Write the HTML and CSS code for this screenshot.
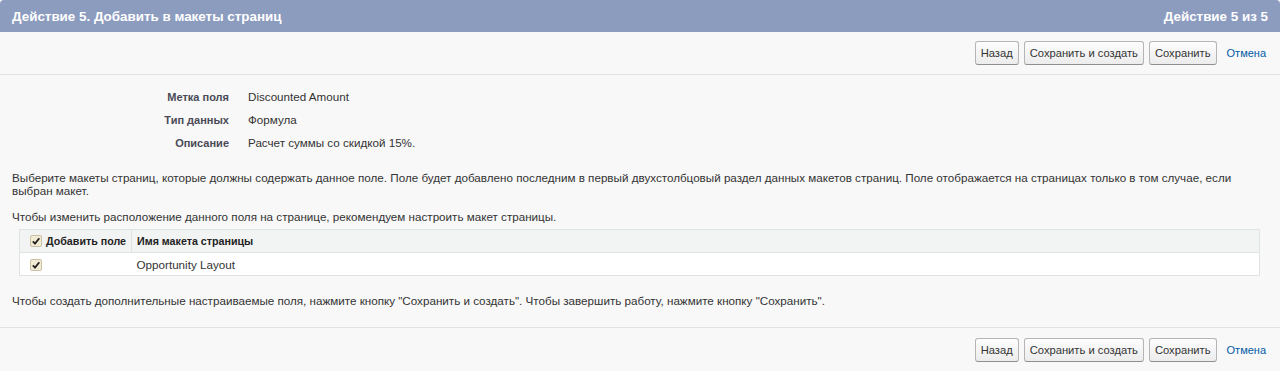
FILE: index.html
```html
<!DOCTYPE html>
<html lang="ru">
<head>
<meta charset="UTF-8">
<meta name="viewport" content="width=device-width, initial-scale=1.0">
<title>Действие 5. Добавить в макеты страниц</title>
<link rel="stylesheet" href="styles.css">
</head>
<body>

<div class="s_block">
    <div class="s_header">
        <h2 class="s_title">Действие 5. Добавить в макеты страниц</h2>
        <span class="s_step">Действие 5 из 5</span>
    </div>

    <div class="s_buttons s_buttons-top">
        <button class="s_btn">Назад</button>
        <button class="s_btn">Сохранить и создать</button>
        <button class="s_btn">Сохранить</button>
        <a href="#" class="s_cancel">Отмена</a>
    </div>

    <div class="s_body">
        <div class="s_fields">
            <div class="s_label">Метка поля</div>
            <div class="s_value">Discounted Amount</div>
            <div class="s_label">Тип данных</div>
            <div class="s_value">Формула</div>
            <div class="s_label">Описание</div>
            <div class="s_value">Расчет суммы со скидкой 15%.</div>
        </div>

        <p class="s_text">Выберите макеты страниц, которые должны содержать данное поле. Поле будет добавлено последним в первый двухстолбцовый раздел данных макетов страниц. Поле отображается на страницах только в том случае, если выбран макет.</p>
        <p class="s_text">Чтобы изменить расположение данного поля на странице, рекомендуем настроить макет страницы.</p>

        <table class="s_table">
            <tr class="s_table-head">
                <th class="s_col-check"><span class="s_check"><svg viewBox="0 0 12 12" width="12" height="12"><path d="M2.8 6.3 L5 8.6 L9.3 3.2" fill="none" stroke="#222" stroke-width="1.8"/></svg></span>Добавить поле</th>
                <th>Имя макета страницы</th>
            </tr>
            <tr class="s_table-row">
                <td class="s_col-check"><span class="s_check"><svg viewBox="0 0 12 12" width="12" height="12"><path d="M2.8 6.3 L5 8.6 L9.3 3.2" fill="none" stroke="#222" stroke-width="1.8"/></svg></span></td>
                <td>Opportunity Layout</td>
            </tr>
        </table>

        <p class="s_text s_text-last">Чтобы создать дополнительные настраиваемые поля, нажмите кнопку "Сохранить и создать". Чтобы завершить работу, нажмите кнопку "Сохранить".</p>
    </div>

    <div class="s_buttons s_buttons-bottom">
        <button class="s_btn">Назад</button>
        <button class="s_btn">Сохранить и создать</button>
        <button class="s_btn">Сохранить</button>
        <a href="#" class="s_cancel">Отмена</a>
    </div>
</div>

</body>
</html>
```

FILE: styles.css
```css
body {
    margin: 0;
    padding: 0;
    background-color: #f8f8f8;
    font-family: "Liberation Sans", Arial, sans-serif;
    font-size: 11.65px;
    color: #222;
}

.s_block {
    background-color: #f8f8f8;
}

.s_header {
    display: flex;
    justify-content: space-between;
    align-items: center;
    height: 32px;
    padding: 0 12px;
    background-color: #8c9cbf;
    border-top-left-radius: 4px;
    border-top-right-radius: 4px;
    color: #fff;
}

.s_title {
    margin: 0;
    font-size: 13.4px;
    font-weight: bold;
}

.s_step {
    font-size: 13.4px;
    font-weight: bold;
}

.s_buttons {
    display: flex;
    justify-content: flex-end;
    align-items: center;
    gap: 5px;
    padding: 0 14px 0 0;
    height: 42px;
}

.s_buttons-top {
    border-bottom: 1px solid #e0e3e5;
}

.s_buttons-bottom {
    border-top: 1px solid #e0e3e5;
    margin-top: 20px;
    height: 44px;
}

.s_btn {
    height: 24px;
    padding: 0 5px;
    font-family: "Liberation Sans", Arial, sans-serif;
    font-size: 11.2px;
    color: #333;
    background: linear-gradient(#fdfdfd, #ececec);
    border: 1px solid #b5b5b5;
    border-bottom-color: #8f8f8f;
    border-radius: 3px;
}

.s_cancel {
    margin-left: 5px;
    font-size: 11px;
    color: #015ba7;
    text-decoration: none;
}

.s_body {
    padding: 0 12px;
}

.s_fields {
    display: grid;
    grid-template-columns: 217px 1fr;
    column-gap: 19px;
    row-gap: 9px;
    padding-top: 15px;
}

.s_label {
    text-align: right;
    font-size: 11px;
    font-weight: bold;
    color: #4a4a56;
    line-height: 14px;
}

.s_value {
    color: #333;
    line-height: 14px;
}

.s_text {
    margin: 0;
    line-height: 13px;
    color: #333;
}

.s_fields + .s_text {
    margin-top: 21px;
}

.s_text + .s_text {
    margin-top: 13px;
}

.s_table {
    margin: 6px 8px 0 7px;
    width: calc(100% - 15px);
    border-collapse: collapse;
    border: 1px solid #e0e3e5;
}

.s_table th,
.s_table td {
    height: 22px;
    padding: 0 5px;
    text-align: left;
    vertical-align: middle;
    white-space: nowrap;
}

.s_table-head {
    background-color: #f2f3f3;
    border-bottom: 1px solid #e0e3e5;
}

.s_table th {
    font-size: 10.7px;
    font-weight: bold;
    color: #222;
}

.s_table th.s_col-check {
    width: 100px;
    border-right: 1px solid #e0e3e5;
}

.s_table-row {
    background-color: #fff;
}

.s_table-row td {
    color: #333;
}

.s_check {
    display: inline-block;
    width: 12px;
    height: 12px;
    margin: 0 4px 0 5px;
    vertical-align: -2px;
    background-color: #f3ecd5;
    border: 1px solid #c9c0a5;
    border-radius: 2px;
    box-sizing: border-box;
}

.s_check svg {
    display: block;
    margin: -1px;
}

.s_text-last {
    margin-top: 18px;
}
```
